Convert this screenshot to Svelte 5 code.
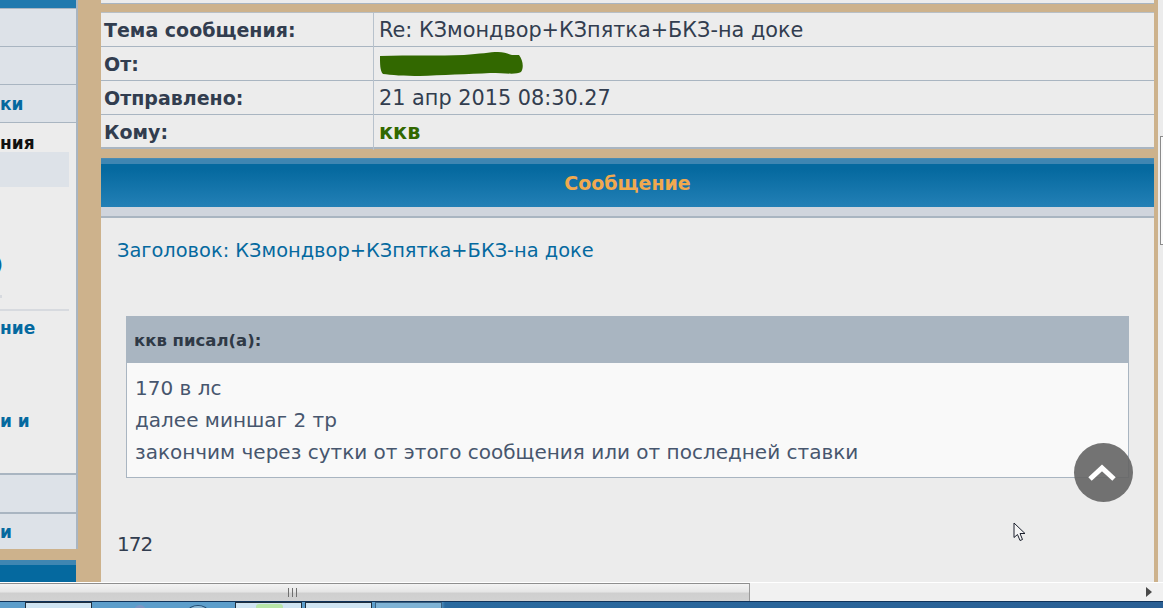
<script>
  const rows = [
    { label: 'Тема сообщения:', value: 'Re: КЗмондвор+КЗпятка+БКЗ-на доке' },
    { label: 'От:', scribble: true },
    { label: 'Отправлено:', value: '21 апр 2015 08:30.27' },
    { label: 'Кому:', value: 'ккв', green: true }
  ];
</script>

<div class="page">
  <div class="view">
    <aside class="side">
      <div class="upper">
        <div class="sidebar-head"></div>
        <div class="tab"></div>
        <div class="tab"></div>
        <div class="tab"><span>ки</span></div>
        <div class="side-body">
          <div class="title">ния</div>
          <div class="hl"></div>
          <div class="paren">)</div>
          <div class="mark"></div>
          <div class="rule"></div>
          <div class="item first">ние</div>
          <div class="item second">и и</div>
        </div>
        <div class="tab top"></div>
        <div class="tab last"><span>и</span></div>
      </div>
      <div class="side-foot"></div>
    </aside>

    <main class="main">
      <div class="topstrip"></div>
      <div class="table">
        {#each rows as r}
          <div class="row">
            <div class="label">{r.label}</div>
            <div class="value" class:green={r.green}>
              {#if r.scribble}
                <svg class="scribble" width="144" height="24" viewBox="0 0 144 24">
                  <path fill="#326800" d="M0 4 C30 3 60 4 84 3 C100 2 110 0 118 0 C124 0 128 2 132 3 L139 3 C143 8 144 16 141 20 C136 23 125 21 110 21 C90 22 60 23 40 24 C25 24 10 23 3 22 C0 19 0 12 0 4 Z"/>
                </svg>
              {:else}
                {r.value}
              {/if}
            </div>
          </div>
        {/each}
      </div>
      <div class="banner">Сообщение</div>
      <div class="subbar"></div>
      <div class="content">
        <div class="subject">Заголовок: КЗмондвор+КЗпятка+БКЗ-на доке</div>
        <div class="quote">
          <div class="quote-head">ккв писал(а):</div>
          <div class="quote-body">
            170 в лс<br />
            далее миншаг 2 тр<br />
            закончим через сутки от этого сообщения или от последней ставки
          </div>
        </div>
        <div class="reply">172</div>
      </div>
    </main>

    <div class="edge">
      <div class="thumb"></div>
    </div>

    <button class="totop" aria-label="Наверх">
      <svg width="30" height="20" viewBox="0 0 30 20"><path d="M3 17 L15 6 L27 17" fill="none" stroke="#fff" stroke-width="5"/></svg>
    </button>

    <svg class="cursor" width="15" height="20" viewBox="0 0 15 20">
      <path d="M1 1 L1 15.500 L4.500 12.500 L7 18.500 L9.500 17.500 L7 11.500 L12 11.500 Z" fill="#f5f5f5" stroke="#1a1f2c" stroke-width="1"/>
    </svg>
  </div>

  <div class="hscroll">
    <div class="hthumb"><span class="grip"></span></div>
    <span class="arrow"></span>
  </div>

  <div class="taskbar">
    <div class="task t1"></div>
    <span class="tray a1"></span>
    <span class="tray a2"></span>
    <div class="task t2"><span class="green-tab"></span></div>
    <div class="task t3"></div>
    <div class="task t4"></div>
  </div>
</div>

<style>
  :global(body) {
    margin: 0;
    background: #cdb28c;
  }
  .page {
    width: 1163px;
    height: 608px;
    display: flex;
    flex-direction: column;
    overflow: hidden;
    font-family: "DejaVu Sans", Verdana, sans-serif;
    color: #323d4f;
  }
  .view {
    position: relative;
    height: 582px;
    flex: none;
    display: flex;
    background: #cdb28c;
  }
  .side {
    width: 78px;
    flex: none;
    display: flex;
    flex-direction: column;
    margin-right: 23px;
    overflow: hidden;
    font-weight: 700;
    font-size: 17px;
    color: #05699f;
  }
  .upper {
    border-right: 2px solid #a9b5c1;
    flex: none;
  }
  .sidebar-head {
    height: 8px;
    background: #2079ae;
    border-bottom: 1px solid #a9b5c1;
  }
  .tab {
    height: 37px;
    background: #dde2e8;
    border-bottom: 1px solid #a9b5c1;
    display: flex;
    align-items: center;
    white-space: nowrap;
  }
  .tab.top {
    border-top: 2px solid #a9b5c1;
    border-bottom-width: 2px;
  }
  .tab.last {
    height: 35px;
    border-bottom: 0;
  }
  .side-body {
    height: 350px;
    background: #ececec;
    display: flex;
    flex-direction: column;
  }
  .title {
    height: 29px;
    padding-top: 10px;
    box-sizing: border-box;
    color: #111;
  }
  .hl {
    height: 35px;
    width: 69px;
    background: #dde2e8;
    flex: none;
  }
  .paren {
    margin: 67px 0 0 -5px;
    height: 22px;
    line-height: 22px;
  }
  .mark {
    margin-top: 19px;
    width: 2px;
    height: 3px;
    background: #d7dadf;
  }
  .rule {
    margin-top: 11px;
    width: 69px;
    height: 2px;
    background: #d7dadf;
    flex: none;
  }
  .item.first {
    margin-top: 7px;
  }
  .item.second {
    margin-top: 73px;
  }
  .side-foot {
    flex: 1;
    width: 76px;
    background: linear-gradient(#cdb28c 11px, #3f86b2 11px, #3f86b2 16px, #05699f 16px);
  }
  .main {
    width: 1053px;
    flex: none;
    display: flex;
    flex-direction: column;
  }
  .topstrip {
    height: 3px;
    background: #ececec;
    border-bottom: 1px solid #a9b5c1;
    flex: none;
  }
  .table {
    margin-top: 9px;
    flex: none;
    box-shadow: 0 -1px 0 #b8bfc5;
    border-bottom: 2px solid #a9b5c1;
  }
  .row {
    display: grid;
    grid-template-columns: 272px 1fr;
    height: 33px;
    border-bottom: 1px solid #a9b5c1;
    background: #ececec;
  }
  .row:last-child {
    height: 32px;
    border-bottom: 0;
  }
  .label {
    font-weight: 700;
    padding-left: 3px;
    line-height: 35px;
    font-size: 19px;
  }
  .value {
    border-left: 1px solid #b8c2cc;
    padding-left: 5px;
    line-height: 35px;
    font-size: 20.8px;
  }
  .green {
    color: #326800;
    font-weight: 700;
  }
  .scribble {
    display: block;
    margin: 5px 0 0 1px;
  }
  .banner {
    margin-top: 9px;
    height: 48px;
    flex: none;
    background: linear-gradient(#3f86b2 0 5px, #05699f 5px 10px, #2380b6 100%);
    color: #f0a94f;
    font-weight: 700;
    font-size: 19px;
    line-height: 48px;
    text-align: center;
    border-top: 1px solid #4a8bb3;
  }
  .subbar {
    height: 9px;
    background: #d0d5dd;
    border-bottom: 2px solid #a9b5c1;
    flex: none;
  }
  .content {
    flex: 1;
    padding: 20px 25px 0 16px;
    font-size: 20px;
    background: #ececec;
  }
  .subject {
    color: #05699f;
    line-height: 26px;
    font-size: 19.4px;
  }
  .quote {
    margin: 52px 0 0 9px;
    border: 1px solid #a9b5c1;
    border-top: 0;
    background: #f9f9f9;
  }
  .quote-head {
    height: 47px;
    background: #a9b5c1;
    color: #2f3946;
    font-weight: 700;
    font-size: 16.5px;
    line-height: 50px;
    padding-left: 7px;
  }
  .quote-body {
    padding: 9px 8px;
    line-height: 32px;
    color: #47566e;
  }
  .reply {
    margin-top: 53px;
    color: #323d4f;
    line-height: 26px;
    letter-spacing: -1px;
  }
  .edge {
    flex: 1;
    margin-left: 4px;
    background: #ececec;
    position: relative;
  }
  .thumb {
    position: absolute;
    left: 2px;
    right: -2px;
    top: 136px;
    height: 109px;
    background: #fafafa;
    border: 1px solid #8b8b8b;
    box-sizing: border-box;
  }
  .totop {
    position: absolute;
    left: 1074px;
    top: 443px;
    width: 59px;
    height: 59px;
    padding: 0;
    border: 0;
    border-radius: 50%;
    background: rgba(100, 100, 100, 0.9);
    display: flex;
    align-items: center;
    justify-content: center;
  }
  .totop svg {
    margin: -2px 0 0 -4px;
  }
  .cursor {
    position: absolute;
    left: 1013px;
    top: 522px;
  }
  .hscroll {
    position: relative;
    height: 19px;
    flex: none;
    background: #f1f1f1;
    border-top: 1px solid #fff;
    box-sizing: border-box;
  }
  .hthumb {
    width: 750px;
    height: 100%;
    box-sizing: border-box;
    border-top: 1px solid #8e8e8e;
    border-right: 1px solid #9a9a9a;
    background: linear-gradient(#f3f3f3, #e6e6e6 45%, #cfcfcf 55%, #d2d2d2);
    display: flex;
    align-items: center;
    padding-left: 288px;
  }
  .grip {
    width: 10px;
    height: 9px;
    background: repeating-linear-gradient(90deg, #6f6f6f 0 1px, transparent 1px 4px);
  }
  .arrow {
    position: absolute;
    left: 1146px;
    top: 4px;
    width: 0;
    height: 0;
    border-left: 6px solid #4a4a4a;
    border-top: 5px solid transparent;
    border-bottom: 5px solid transparent;
  }
  .taskbar {
    flex: 1;
    position: relative;
    border-top: 1px solid #10335a;
    background: linear-gradient(90deg, #5d9ecb 0, #5d9ecb 440px, #2a6a9f 445px, #2a5f94 100%);
  }
  .task {
    position: absolute;
    top: 0;
    height: 8px;
    width: 67px;
    border: 1px solid #20303f;
    border-bottom: 0;
    background: #cfe4f2;
    box-sizing: border-box;
  }
  .t1 { left: 25px; }
  .t2 { left: 235px; }
  .t3 { left: 305px; }
  .t4 { left: 375px; background: #7fb3d5; border-color: #3a6080; }
  .green-tab {
    display: block;
    margin: 1px 0 0 20px;
    width: 27px;
    height: 8px;
    border-radius: 3px 3px 0 0;
    background: #b8e6a8;
  }
  .tray {
    position: absolute;
    top: 3px;
    height: 12px;
    border-radius: 50%;
    box-sizing: border-box;
  }
  .a1 { left: 134px; width: 12px; background: #7d96c4; }
  .a2 { left: 188px; width: 20px; border: 1px solid #1f4a70; background: #8dbad8; }
</style>
